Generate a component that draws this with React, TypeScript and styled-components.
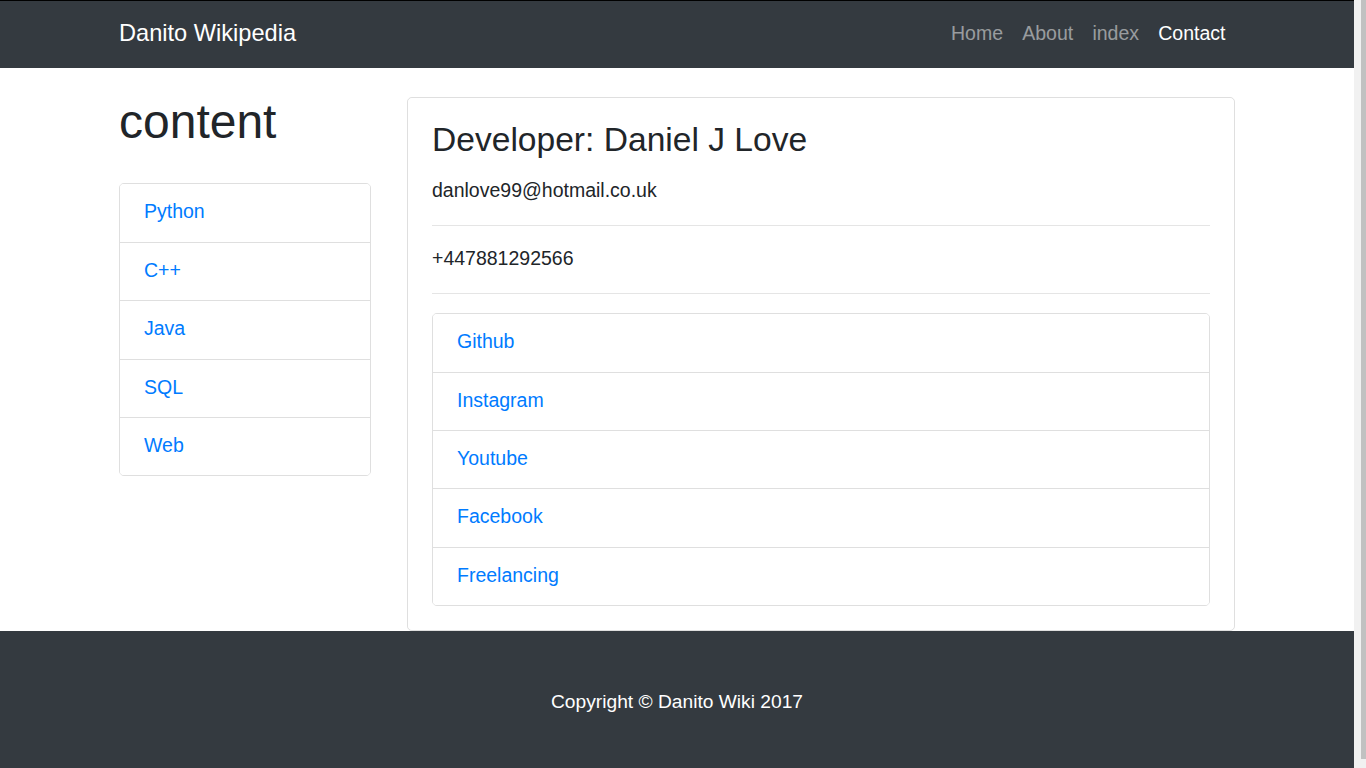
import React from "react";
import styled, { createGlobalStyle } from "styled-components";

const GlobalStyle = createGlobalStyle`
  html, body {
    margin: 0;
    padding: 0;
    overflow: hidden;
  }
  body {
    font-family: "Liberation Sans", Arial, sans-serif;
    font-size: 19.5px;
    line-height: 28.8px;
    color: #212529;
    background: #fff;
  }
  * { box-sizing: border-box; }
`;

const Shell = styled.div`
  display: flex;
  height: 100vh;
  overflow: hidden;
`;

const Page = styled.div`
  flex: 1;
  min-width: 0;
  overflow: hidden;
`;

const ScrollTrack = styled.div`
  flex: 0 0 12px;
  background: #f1f1f1;
  display: flex;
  justify-content: flex-end;
  align-items: flex-start;
`;

const ScrollThumb = styled.div`
  width: 5px;
  height: 759px;
  background: #c1c1c1;
`;

const Navbar = styled.nav`
  background: #343a40;
  border-top: 1px solid #000;
  padding: 9.6px 19.2px;
`;

const Container = styled.div`
  max-width: 1152px;
  margin: 0 auto;
  padding: 0 18px;
`;

const NavInner = styled(Container)`
  display: flex;
  align-items: center;
  justify-content: space-between;
`;

const Brand = styled.a`
  font-size: 23.6px;
  line-height: 36px;
  padding: 4px 0 8px;
  color: #fff;
  text-decoration: none;
`;

const NavList = styled.ul`
  display: flex;
  list-style: none;
  margin: 0;
  padding: 0;
`;

const NavLink = styled.a<{ $active?: boolean }>`
  display: block;
  padding: 8.6px 9.6px 10.6px;
  line-height: 28.8px;
  color: ${(p) => (p.$active ? "#fff" : "rgba(255,255,255,0.5)")};
  text-decoration: none;
`;

const Row = styled.div`
  display: grid;
  grid-template-columns: 252px 1fr;
  column-gap: 36px;
  align-items: start;
`;

const Heading = styled.h1`
  font-size: 48px;
  font-weight: 500;
  line-height: 57.6px;
  margin: 24.8px 0 32.8px;
`;

const ListGroup = styled.div`
  display: flex;
  flex-direction: column;
  border: 1px solid rgba(0, 0, 0, 0.125);
  border-radius: 4.8px;
  overflow: hidden;
`;

const ListItem = styled.a`
  display: block;
  padding: 13.1px 24px 15.5px;
  line-height: 28.8px;
  color: #007bff;
  text-decoration: none;
  background: #fff;
  & + & {
    border-top: 1px solid rgba(0, 0, 0, 0.125);
  }
`;

const Card = styled.div`
  margin-top: 29px;
  border: 1px solid rgba(0, 0, 0, 0.125);
  border-radius: 4.8px;
  padding: 24px;
`;

const CardTitle = styled.h3`
  font-size: 33.6px;
  font-weight: 500;
  line-height: 40.3px;
  margin: -2px 0 16.4px;
`;

const Text = styled.p`
  margin: 0;
  line-height: 26px;
  padding-bottom: 2.8px;
`;

const Rule = styled.hr`
  border: 0;
  border-top: 1px solid rgba(0, 0, 0, 0.1);
  margin: 19.2px 0;
`;

const Footer = styled.footer`
  background: #343a40;
  padding: 56.6px 0 58.6px;
`;

const FooterText = styled.p`
  margin: 0;
  font-size: 19.2px;
  color: #fff;
  text-align: center;
  line-height: 28.8px;
`;

const languages = ["Python", "C++", "Java", "SQL", "Web"];
const socials = ["Github", "Instagram", "Youtube", "Facebook", "Freelancing"];

export default function App() {
  return (
    <>
      <GlobalStyle />
      <Shell>
        <Page>
          <Navbar>
            <NavInner>
              <Brand href="#">Danito Wikipedia</Brand>
              <NavList>
                <li><NavLink href="#">Home</NavLink></li>
                <li><NavLink href="#">About</NavLink></li>
                <li><NavLink href="#">index</NavLink></li>
                <li><NavLink href="#" $active>Contact</NavLink></li>
              </NavList>
            </NavInner>
          </Navbar>
          <Container>
            <Row>
              <div>
                <Heading>content</Heading>
                <ListGroup>
                  {languages.map((l) => (
                    <ListItem key={l} href="#">{l}</ListItem>
                  ))}
                </ListGroup>
              </div>
              <Card>
                <CardTitle>Developer: Daniel J Love</CardTitle>
                <Text>danlove99@hotmail.co.uk</Text>
                <Rule />
                <Text>+447881292566</Text>
                <Rule />
                <ListGroup>
                  {socials.map((s) => (
                    <ListItem key={s} href="#">{s}</ListItem>
                  ))}
                </ListGroup>
              </Card>
            </Row>
          </Container>
          <Footer>
            <Container>
              <FooterText>Copyright © Danito Wiki 2017</FooterText>
            </Container>
          </Footer>
        </Page>
        <ScrollTrack>
          <ScrollThumb />
        </ScrollTrack>
      </Shell>
    </>
  );
}
